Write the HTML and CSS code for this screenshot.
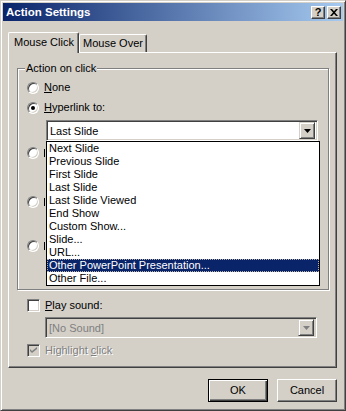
FILE: index.html
```html
<!DOCTYPE html>
<html lang="en">
<head>
	<meta charset="UTF-8">
	<title>Action Settings</title>
	<link rel="stylesheet" href="styles.css">
</head>
<body>
	<div class="window">
		<div class="titlebar">
			<span class="titlebar__text">Action Settings</span>
			<div class="titlebar__buttons">
				<div class="titlebar__btn">?</div>
				<div class="titlebar__btn">
					<svg width="8" height="7" viewBox="0 0 8 7"><path d="M0 0h2l2 2.2L6 0h2L5 3.5 8 7H6L4 4.8 2 7H0l3-3.5z" fill="#000"/></svg>
				</div>
			</div>
		</div>

		<div class="tabs">
			<div class="tab tab--active">Mouse Click</div>
			<div class="tab">Mouse Over</div>
		</div>

		<div class="panel">
			<fieldset class="group">
				<legend class="group__title">Action on click</legend>
				<div class="option option--first"><span class="radio"></span><span><u>N</u>one</span></div>
				<div class="option option--link"><span class="radio radio--on"></span><span><u>H</u>yperlink to:</span></div>
				<div class="combo combo--link">
					<span class="combo__value">Last Slide</span>
					<span class="combo__btn"><svg width="7" height="4" viewBox="0 0 7 4"><path d="M0 0h7L3.5 4z" fill="#000"/></svg></span>
					<div class="droplist">
						<div class="droplist__item">Next Slide</div>
						<div class="droplist__item">Previous Slide</div>
						<div class="droplist__item">First Slide</div>
						<div class="droplist__item">Last Slide</div>
						<div class="droplist__item">Last Slide Viewed</div>
						<div class="droplist__item">End Show</div>
						<div class="droplist__item">Custom Show...</div>
						<div class="droplist__item">Slide...</div>
						<div class="droplist__item">URL...</div>
						<div class="droplist__item droplist__item--sel">Other PowerPoint Presentation...</div>
						<div class="droplist__item">Other File...</div>
					</div>
				</div>
				<!-- these rows sit under the open list, only the edge of the label shows -->
				<div class="option option--program"><span class="radio"></span><span class="option__stub"></span></div>
				<div class="option option--macro"><span class="radio"></span><span class="option__stub"></span></div>
				<div class="option option--object"><span class="radio"></span><span class="option__stub"></span></div>
			</fieldset>

			<div class="option option--sound"><span class="check"></span><span><u>P</u>lay sound:</span></div>
			<div class="combo combo--sound combo--disabled">
				<span class="combo__value">[No Sound]</span>
				<span class="combo__btn"><svg width="7" height="4" viewBox="0 0 7 4"><path d="M0 0h7L3.5 4z" fill="#808080"/></svg></span>
			</div>
			<div class="option option--highlight option--disabled">
				<span class="check check--disabled">
					<svg width="7" height="7" viewBox="0 0 7 7"><path d="M0 2l2 2 5-4v2L2 6 0 4z" fill="#808080"/></svg>
				</span>
				<span>Highlight <u>c</u>lick</span>
			</div>
		</div>

		<div class="buttons">
			<div class="btn btn--default">OK</div>
			<div class="btn">Cancel</div>
		</div>
	</div>
</body>
</html>
```

FILE: styles.css
```css
*{
	margin: 0;
	padding: 0;
	box-sizing: border-box;
}
body{
	width: 346px;
	height: 411px;
	overflow: hidden;
	font-family: "Liberation Sans", Arial, sans-serif;
	font-size: 11px;
	color: #000;
}

.window{
	width: 346px;
	height: 411px;
	padding: 2px;
	background-color: #d4d0c8;
	border: 1px solid;
	border-color: #d4d0c8 #404040 #404040 #d4d0c8;
	box-shadow: inset 1px 1px #fff, inset -1px -1px #808080;
}

.titlebar{
	display: flex;
	align-items: center;
	height: 18px;
	padding-left: 3px;
	background: linear-gradient(to right, #0a246a, #a6caf0);
}
.titlebar__text{
	flex-grow: 1;
	color: #fff;
	font-weight: bold;
	font-size: 11.5px;
}
.titlebar__buttons{
	display: flex;
	gap: 2px;
	margin-right: 2px;
}
.titlebar__btn{
	display: flex;
	align-items: center;
	justify-content: center;
	width: 14px;
	height: 13px;
	background-color: #d4d0c8;
	border: 1px solid;
	border-color: #fff #404040 #404040 #fff;
	box-shadow: inset -1px -1px #808080;
	font-weight: bold;
	font-size: 11px;
	line-height: 11px;
}

.tabs{
	display: flex;
	align-items: flex-end;
	height: 20px;
	margin: 11px 0 0 5px;
}
.tab{
	height: 18px;
	width: 68px;
	padding-left: 3px;
	line-height: 17px;
	white-space: nowrap;
	background-color: #d4d0c8;
	border: 1px solid;
	border-bottom: none;
	border-color: #fff #404040 #404040 #fff;
	box-shadow: inset -1px 0 #808080;
	border-radius: 2px 2px 0 0;
}
.tab--active{
	position: relative;
	z-index: 1;
	width: 71px;
	height: 21px;
	margin-bottom: -1px;
	padding-left: 5px;
	line-height: 18px;
}

.panel{
	width: 329px;
	height: 316px;
	margin-left: 5px;
	border: 1px solid;
	border-color: #fff #404040 #404040 #fff;
	box-shadow: inset -1px -1px #808080;
}

.group{
	position: relative;
	width: 312px;
	height: 229px;
	margin: 8px 0 0 8px;
	padding: 0 0 0 9px;
	border: 1px solid #808080;
	box-shadow: inset 1px 1px #fff, 1px 1px #fff;
}
.group__title{
	margin-left: -2px;
	padding: 0 1px;
	line-height: 14px;
	background-color: #d4d0c8;
}

.option{
	display: flex;
	align-items: center;
	gap: 5px;
	height: 13px;
	line-height: 13px;
	white-space: nowrap;
}
.option--first{ margin-top: 6px; }
.option--link{ margin-top: 7px; }
.option--program{ margin-top: 5px; }
.option--macro{ margin-top: 36px; }
.option--object{ margin-top: 31px; }
.option--sound{
	margin: 9px 0 0 18px;
}
.option--highlight{
	margin: 6px 0 0 18px;
}
.option--disabled{
	color: #808080;
	text-shadow: 1px 1px #fff;
}
.option__stub{
	width: 1px;
	height: 8px;
	background-color: #000;
}

.radio{
	position: relative;
	flex-shrink: 0;
	width: 12px;
	height: 12px;
	border-radius: 50%;
	background-color: #fff;
	border: 1px solid;
	border-color: #808080 #fff #fff #808080;
	box-shadow: inset 1px 1px #404040, inset -1px -1px #d4d0c8;
}
.radio--on::after{
	content: "";
	position: absolute;
	left: 3px;
	top: 3px;
	width: 4px;
	height: 4px;
	border-radius: 50%;
	background-color: #000;
}

.check{
	display: flex;
	align-items: center;
	justify-content: center;
	flex-shrink: 0;
	width: 13px;
	height: 13px;
	background-color: #fff;
	border: 1px solid;
	border-color: #808080 #fff #fff #808080;
	box-shadow: inset 1px 1px #404040, inset -1px -1px #d4d0c8;
}
.check--disabled{
	background-color: #d4d0c8;
}

.combo{
	position: relative;
	display: flex;
	align-items: center;
	justify-content: space-between;
	width: 272px;
	height: 21px;
	padding: 2px;
	background-color: #fff;
	border: 1px solid;
	border-color: #808080 #fff #fff #808080;
	box-shadow: inset 1px 1px #404040, inset -1px -1px #d4d0c8;
}
.combo--link{
	margin: 6px 0 0 19px;
}
.combo--sound{
	margin: 5px 0 0 36px;
}
.combo--disabled{
	background-color: #d4d0c8;
	color: #808080;
}
.combo__value{
	padding-left: 1px;
}
.combo__btn{
	display: flex;
	align-items: center;
	justify-content: center;
	width: 16px;
	height: 17px;
	background-color: #d4d0c8;
	border: 1px solid;
	border-color: #d4d0c8 #404040 #404040 #d4d0c8;
	box-shadow: inset 1px 1px #fff, inset -1px -1px #808080;
}

.droplist{
	position: absolute;
	z-index: 2;
	top: 20px;
	left: -1px;
	width: 274px;
	background-color: #fff;
	border: 1px solid #000;
}
.droplist__item{
	height: 13px;
	line-height: 13px;
	padding-left: 2px;
	white-space: nowrap;
}
.droplist__item--sel{
	background-color: #0a246a;
	color: #fff;
	outline: 1px dotted #b8b4ac;
	outline-offset: -1px;
}

.buttons{
	display: flex;
	justify-content: flex-end;
	gap: 9px;
	margin: 11px 6px 0 0;
}
.btn{
	width: 60px;
	height: 23px;
	line-height: 20px;
	text-align: center;
	border: 1px solid;
	border-color: #fff #404040 #404040 #fff;
	box-shadow: inset -1px -1px #808080;
}
.btn--default{
	border-color: #000;
	box-shadow: inset 1px 1px #fff, inset -1px -1px #404040, inset -2px -2px #808080;
}
```
